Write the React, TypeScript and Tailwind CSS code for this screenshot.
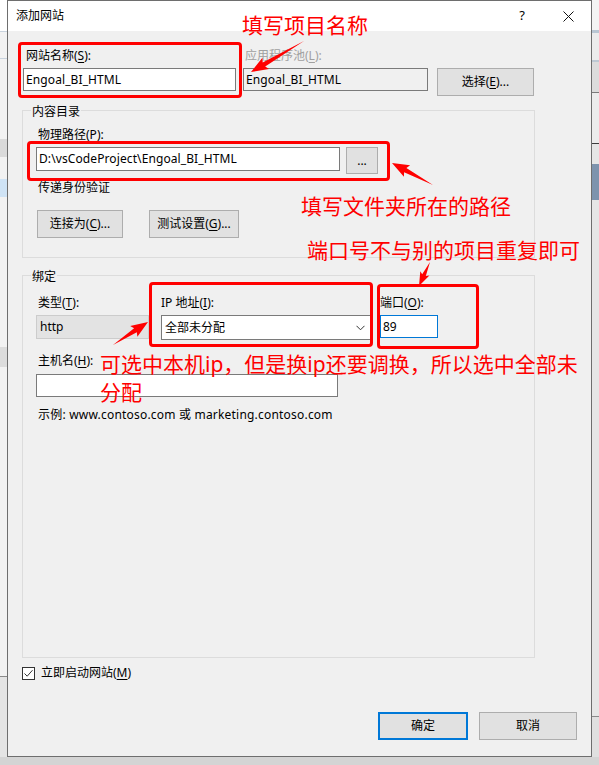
import React from 'react';

const base = 'text-[12px] leading-[16px] whitespace-nowrap';
const lbl = `${base} text-black`;

const U = ({ children }: { children: React.ReactNode }) => (
  <span className="underline underline-offset-[2px]">{children}</span>
);

const arrow = (x1: number, y1: number, x2: number, y2: number, head = 15, hw = 6.5, sw = 2.4) => {
  const dx = x2 - x1;
  const dy = y2 - y1;
  const len = Math.hypot(dx, dy);
  const ux = dx / len;
  const uy = dy / len;
  const nx = -uy;
  const ny = ux;
  const bx = x2 - ux * head;
  const by = y2 - uy * head;
  const pts = [
    [x1, y1],
    [bx + nx * sw, by + ny * sw],
    [bx + nx * hw - ux * 2, by + ny * hw - uy * 2],
    [x2, y2],
    [bx - nx * hw - ux * 2, by - ny * hw - uy * 2],
    [bx - nx * sw, by - ny * sw],
  ];
  return pts.map((p) => p.map((v) => v.toFixed(1)).join(',')).join(' ');
};

const Btn = ({ children, className = '' }: { children: React.ReactNode; className?: string }) => (
  <div
    className={`flex items-center justify-center bg-[#e1e1e1] border border-[#adadad] text-[12px] text-black ${className}`}
  >
    {children}
  </div>
);

export default function App() {
  return (
    <div className="relative w-[599px] h-[765px] overflow-hidden bg-[#d4d4d4] font-['Noto_Sans','Noto_Sans_CJK_SC',sans-serif]">
      <div className="flex h-[757px]">
        {/* window behind, left edge */}
        <div className="w-[7px] h-full bg-[#f2f2f2] flex flex-col">
          <div className="h-[31px] bg-white" />
          <div className="h-[1px] bg-[#c9d3de]" />
          <div className="h-[26px]" />
          <div className="h-[1px] bg-[#c9d3de]" />
          <div className="h-[80px]" />
          <div className="h-[18px] bg-[#dadada]" />
          <div className="h-[22px]" />
          <div className="h-[18px] bg-[#cfe3f5]" />
          <div className="h-[150px]" />
          <div className="h-[20px] bg-[#dcdcdc]" />
          <div className="flex-1" />
          <div className="h-[1px] bg-[#8a8a8a]" />
          <div className="h-[80px] bg-[#e4e4e4]" />
        </div>

        {/* dialog */}
        <div className="w-[585px] h-[757px] border border-[#6e6e6e] bg-[#f0f0f0] flex flex-col">
          <div className="h-[30px] bg-white flex items-center">
            <span className="pl-[8px] text-[12px] text-black">添加网站</span>
            <div className="flex-1" />
            <div className="w-[46px] h-full flex items-center justify-center text-[13px] text-black">?</div>
            <div className="w-[46px] h-full flex items-center justify-center">
              <svg width="11" height="11" viewBox="0 0 11 11">
                <path d="M0.5 0.5 L10.5 10.5 M10.5 0.5 L0.5 10.5" stroke="#111" strokeWidth="1" />
              </svg>
            </div>
          </div>

          <div className="flex-1 flex flex-col px-[14px]">
            {/* row 1 */}
            <div className="flex items-start mt-[17px]">
              <div className="ml-[1px] w-[213px] flex flex-col">
                <span className={`${lbl} pl-[3px]`}>
                  网站名称(<U>S</U>):
                </span>
                <div className="mt-[4px] h-[23px] bg-white border border-[#7a7a7a] flex items-center pl-[2px] text-[12px] tracking-[0.1px] text-black">
                  Engoal_BI_HTML
                </div>
              </div>
              <div className="ml-[7px] w-[185px] flex flex-col">
                <span className={`${base} pl-[2px] text-[#a0a0a0]`}>
                  应用程序池(<U>L</U>):
                </span>
                <div className="mt-[4px] h-[23px] bg-[#f0f0f0] border border-[#7a7a7a] flex items-center pl-[2px] text-[12px] tracking-[0.1px] text-black">
                  Engoal_BI_HTML
                </div>
              </div>
              <div className="ml-[9px] w-[97px] flex flex-col">
                <span className="h-[16px]" />
                <Btn className="mt-[4px] h-[28px]">
                  选择(<U>E</U>)...
                </Btn>
              </div>
            </div>

            {/* 内容目录 */}
            <div className="mt-[14px] w-[513px] h-[148px] border border-[#dcdcdc] flex flex-col">
              <span className={`${lbl} -mt-[7px] ml-[8px] px-[1px] w-fit bg-[#f0f0f0]`}>内容目录</span>
              <span className={`${lbl} mt-[7px] ml-[15px]`}>
                物理路径(<U>P</U>):
              </span>
              <div className="mt-[4px] flex items-start">
                <div className="ml-[13px] w-[304px] h-[24px] bg-white border border-[#7a7a7a] flex items-center pl-[2px] text-[12px] tracking-[0.1px] text-black">
                  D:\vsCodeProject\Engoal_BI_HTML
                </div>
                <Btn className="ml-[6px] w-[32px] h-[27px]">...</Btn>
              </div>
              <span className={`${lbl} mt-[6px] ml-[15px]`}>传递身份验证</span>
              <div className="mt-[14px] flex">
                <Btn className="ml-[14px] w-[86px] h-[28px]">
                  连接为(<U>C</U>)...
                </Btn>
                <Btn className="ml-[26px] w-[90px] h-[28px]">
                  测试设置(<U>G</U>)...
                </Btn>
              </div>
            </div>

            {/* 绑定 */}
            <div className="mt-[17px] w-[513px] h-[383px] border border-[#dcdcdc] flex flex-col">
              <span className={`${lbl} -mt-[7px] ml-[8px] px-[1px] w-fit bg-[#f0f0f0]`}>绑定</span>
              <div className="mt-[10px] flex items-start">
                <div className="ml-[13px] w-[113px] flex flex-col">
                  <span className={`${lbl} pl-[2px]`}>
                    类型(<U>T</U>):
                  </span>
                  <div className="mt-[4px] h-[24px] bg-[#e3e3e3] border border-[#cccccc] flex items-center pl-[3px] text-[12px] text-black">
                    http
                  </div>
                </div>
                <div className="ml-[12px] w-[210px] flex flex-col">
                  <span className={lbl}>
                    IP 地址(<U>I</U>):
                  </span>
                  <div className="mt-[4px] h-[25px] bg-white border border-[#7a7a7a] flex items-center pl-[3px] pr-[5px] text-[12px] text-black">
                    <span className="flex-1">全部未分配</span>
                    <svg width="9" height="6" viewBox="0 0 9 6">
                      <path d="M0.5 0.8 L4.5 4.8 L8.5 0.8" fill="none" stroke="#333" strokeWidth="1" />
                    </svg>
                  </div>
                </div>
                <div className="ml-[9px] w-[58px] flex flex-col">
                  <span className={lbl}>
                    端口(<U>O</U>):
                  </span>
                  <div className="mt-[4px] h-[23px] bg-white border border-[#0078d7] flex items-center pl-[2px] text-[12px] text-black">
                    89
                  </div>
                </div>
              </div>
              <span className={`${lbl} mt-[13px] ml-[15px]`}>
                主机名(<U>H</U>):
              </span>
              <div className="mt-[5px] ml-[13px] w-[302px] h-[23px] bg-white border border-[#7a7a7a]" />
              <span className={`${lbl} mt-[10px] ml-[15px] tracking-[0.2px]`}>
                示例: www.contoso.com 或 marketing.contoso.com
              </span>
            </div>

            <div className="mt-[7px] h-[16px] flex items-center">
              <div className="w-[13px] h-[13px] border border-[#333333] bg-white flex items-center justify-center">
                <svg width="11" height="11" viewBox="0 0 11 11">
                  <path d="M1.5 5.5 L4.2 8.2 L9.5 2.2" fill="none" stroke="#333" strokeWidth="1" />
                </svg>
              </div>
              <span className={`${lbl} ml-[6px]`}>
                立即启动网站(<U>M</U>)
              </span>
            </div>

            <div className="mt-[31px] flex justify-end gap-[11px]">
              <div className="w-[90px] h-[28px] flex items-center justify-center bg-[#e1e1e1] border-2 border-[#0078d7] text-[12px] text-black">
                确定
              </div>
              <Btn className="w-[98px] h-[28px]">取消</Btn>
            </div>
          </div>
        </div>

        {/* window behind, right edge */}
        <div className="w-[7px] h-full bg-[#e6e6e6] flex flex-col">
          <div className="h-[30px] bg-[#f4f4f4]" />
          <div className="h-[3px] bg-[#b9c6d3]" />
          <div className="h-[27px] bg-[#ececec]" />
          <div className="h-[2px] bg-[#bdc8d3]" />
          <div className="h-[30px] bg-[#dcdcdc]" />
          <div className="h-[1px] bg-[#7a7a7a]" />
          <div className="h-[50px] bg-[#ececec]" />
          <div className="h-[1px] bg-[#3d3d3d]" />
          <div className="h-[20px]" />
          <div className="h-[36px] bg-[#7d93ad]" />
          <div className="flex-1" />
          <div className="h-[1px] bg-[#8a8a8a]" />
          <div className="h-[40px] bg-[#e0e0e0]" />
        </div>
      </div>

      {/* annotations */}
      <div className="absolute left-[18px] top-[42px] w-[224px] h-[56px] border-[3px] border-[#ff0000] rounded-[4px]" />
      <div className="absolute left-[27px] top-[141px] w-[363px] h-[40px] border-[3px] border-[#ff0000] rounded-[4px]" />
      <div className="absolute left-[149px] top-[282px] w-[224px] h-[65px] border-[3px] border-[#ff0000] rounded-[4px]" />
      <div className="absolute left-[377px] top-[284px] w-[102px] h-[65px] border-[3px] border-[#ff0000] rounded-[4px]" />

      <span className="absolute left-[242px] top-[13px] text-[21px] leading-[24px] text-[#ff0000] whitespace-nowrap">
        填写项目名称
      </span>
      <span className="absolute left-[301px] top-[194px] text-[21px] leading-[24px] text-[#ff0000] whitespace-nowrap">
        填写文件夹所在的路径
      </span>
      <span className="absolute left-[307px] top-[238px] text-[21px] leading-[24px] text-[#ff0000] whitespace-nowrap">
        端口号不与别的项目重复即可
      </span>
      <span className="absolute left-[100px] top-[350px] text-[21px] leading-[28px] text-[#ff0000] whitespace-nowrap">
        可选中本机ip，但是换ip还要调换，所以选中全部未
        <br />
        分配
      </span>

      <svg className="absolute inset-0 pointer-events-none" width="599" height="765">
        <polygon points={arrow(304, 41, 251, 72)} fill="#ff0000" />
        <polygon points={arrow(433, 185, 392, 163)} fill="#ff0000" />
        <polygon points={arrow(430, 262, 419, 286, 12, 5, 2)} fill="#ff0000" />
        <polygon points={arrow(113, 345, 148, 322)} fill="#ff0000" />
      </svg>
    </div>
  );
}
